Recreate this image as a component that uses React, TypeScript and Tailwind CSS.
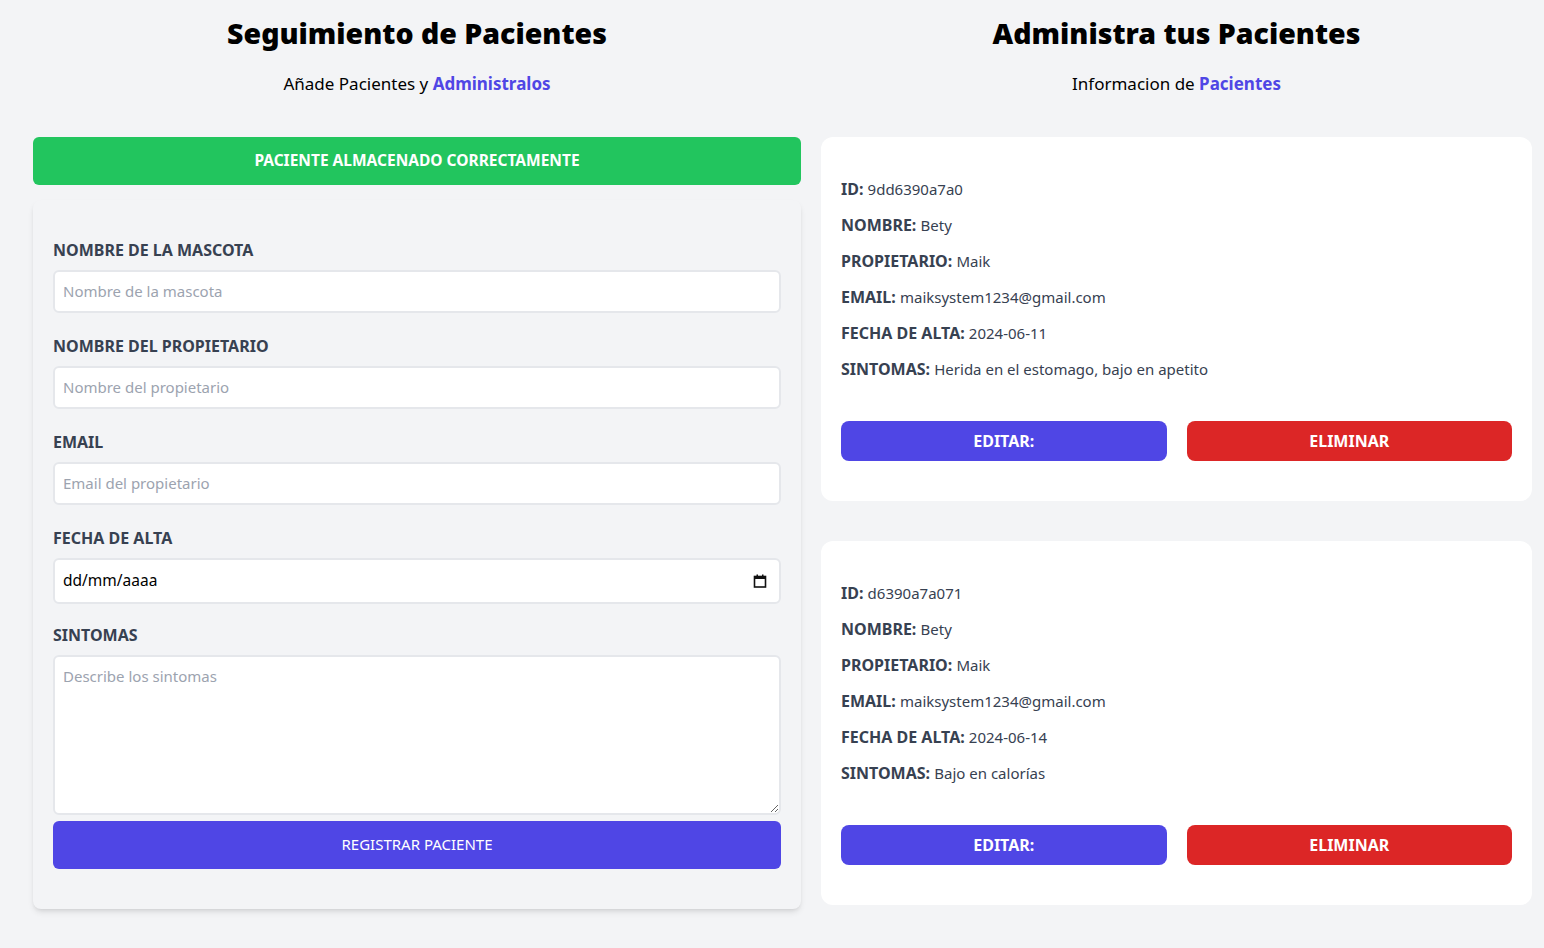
import React from "react";

const patients = [
  {
    id: "9dd6390a7a0",
    nombre: "Bety",
    propietario: "Maik",
    email: "maiksystem1234@gmail.com",
    fecha: "2024-06-11",
    sintomas: "Herida en el estomago, bajo en apetito",
  },
  {
    id: "d6390a7a071",
    nombre: "Bety",
    propietario: "Maik",
    email: "maiksystem1234@gmail.com",
    fecha: "2024-06-14",
    sintomas: "Bajo en calorías",
  },
];

function Field({ label, value }: { label: string; value: string }) {
  return (
    <p className="text-[#374151] text-[15px] leading-6 mb-3">
      <span className="font-bold text-base">{label}: </span>
      {value}
    </p>
  );
}

const inputCls =
  "mt-2 w-full h-[43px] border-2 border-[#e5e7eb] bg-white rounded-md px-2 placeholder-[#9ca3af] text-[15px] outline-none";

export default function App() {
  return (
    <div
      className="min-h-[948px] bg-[#f3f4f6] text-[#374151]"
      style={{ fontFamily: '"Noto Sans", "Open Sans", sans-serif' }}
    >
      <div className="flex gap-5 pl-[33px] pr-3 pt-[15px]">
        {/* Left */}
        <div className="w-[768px] shrink-0">
          <h2 className="text-center text-[28.5px] leading-9 font-black text-black">
            Seguimiento de Pacientes
          </h2>
          <p className="text-center text-[17px] mt-[20px] text-black">
            Añade Pacientes y{" "}
            <span className="font-bold text-[#4f46e5]">Administralos</span>
          </p>

          <div className="mt-[40px] bg-[#22c55e] text-white text-center font-bold uppercase text-[15.5px] rounded-md h-12 flex items-center justify-center">
            Paciente almacenado correctamente
          </div>

          <form className="mt-[15px] bg-[#f3f4f6] shadow-md rounded-lg px-5 pt-[38px] pb-10">
            <div className="mb-[21px]">
              <label className="block text-[#374151] uppercase font-bold leading-6">
                Nombre de la Mascota
              </label>
              <input type="text" placeholder="Nombre de la mascota" className={inputCls} />
            </div>
            <div className="mb-[21px]">
              <label className="block text-[#374151] uppercase font-bold leading-6">
                Nombre del Propietario
              </label>
              <input type="text" placeholder="Nombre del propietario" className={inputCls} />
            </div>
            <div className="mb-[21px]">
              <label className="block text-[#374151] uppercase font-bold leading-6">
                Email
              </label>
              <input type="email" placeholder="Email del propietario" className={inputCls} />
            </div>
            <div className="mb-[19px]">
              <label className="block text-[#374151] uppercase font-bold leading-6">
                Fecha de Alta
              </label>
              <div className="mt-2 w-full h-[46px] border-2 border-[#e5e7eb] bg-white rounded-md px-2 flex items-center justify-between text-black text-[15.5px]">
                <span>dd/mm/aaaa</span>
                <svg width="14" height="14" viewBox="0 0 14 14" className="mr-1">
                  <rect x="1.5" y="2.5" width="11" height="10.5" fill="none" stroke="#111" strokeWidth="1.6" />
                  <rect x="1.5" y="2.5" width="11" height="2.5" fill="#111" />
                  <rect x="3.5" y="0.5" width="1.5" height="3" fill="#111" />
                  <rect x="9" y="0.5" width="1.5" height="3" fill="#111" />
                </svg>
              </div>
            </div>
            <div>
              <label className="block text-[#374151] uppercase font-bold leading-6">
                Sintomas
              </label>
              <textarea
                placeholder="Describe los sintomas"
                className="mt-2 w-full h-[160px] border-2 border-[#e5e7eb] bg-white rounded-md px-2 py-2 placeholder-[#9ca3af] text-[15px] outline-none block"
              />
            </div>
            <button
              type="button"
              className="mt-[6px] w-full h-12 bg-[#4f46e5] text-white uppercase rounded-md text-[15px]"
            >
              Registrar Paciente
            </button>
          </form>
        </div>

        {/* Right */}
        <div className="w-[711px] shrink-0">
          <h2 className="text-center text-[28.5px] leading-9 font-black text-black">
            Administra tus Pacientes
          </h2>
          <p className="text-center text-[17px] mt-[20px] text-black">
            Informacion de{" "}
            <span className="font-bold text-[#4f46e5]">Pacientes</span>
          </p>

          <div className="mt-[40px]">
            {patients.map((p) => (
              <div key={p.id} className="bg-white rounded-xl px-5 pt-10 pb-10 mb-10">
                <Field label="ID" value={p.id} />
                <Field label="NOMBRE" value={p.nombre} />
                <Field label="PROPIETARIO" value={p.propietario} />
                <Field label="EMAIL" value={p.email} />
                <Field label="FECHA DE ALTA" value={p.fecha} />
                <Field label="SINTOMAS" value={p.sintomas} />
                <div className="flex gap-5 mt-10">
                  <button className="flex-1 h-10 bg-[#4f46e5] text-white font-bold uppercase rounded-lg">
                    Editar:
                  </button>
                  <button className="flex-1 h-10 bg-[#dc2626] text-white font-bold uppercase rounded-lg">
                    Eliminar
                  </button>
                </div>
              </div>
            ))}
          </div>
        </div>
      </div>
    </div>
  );
}
